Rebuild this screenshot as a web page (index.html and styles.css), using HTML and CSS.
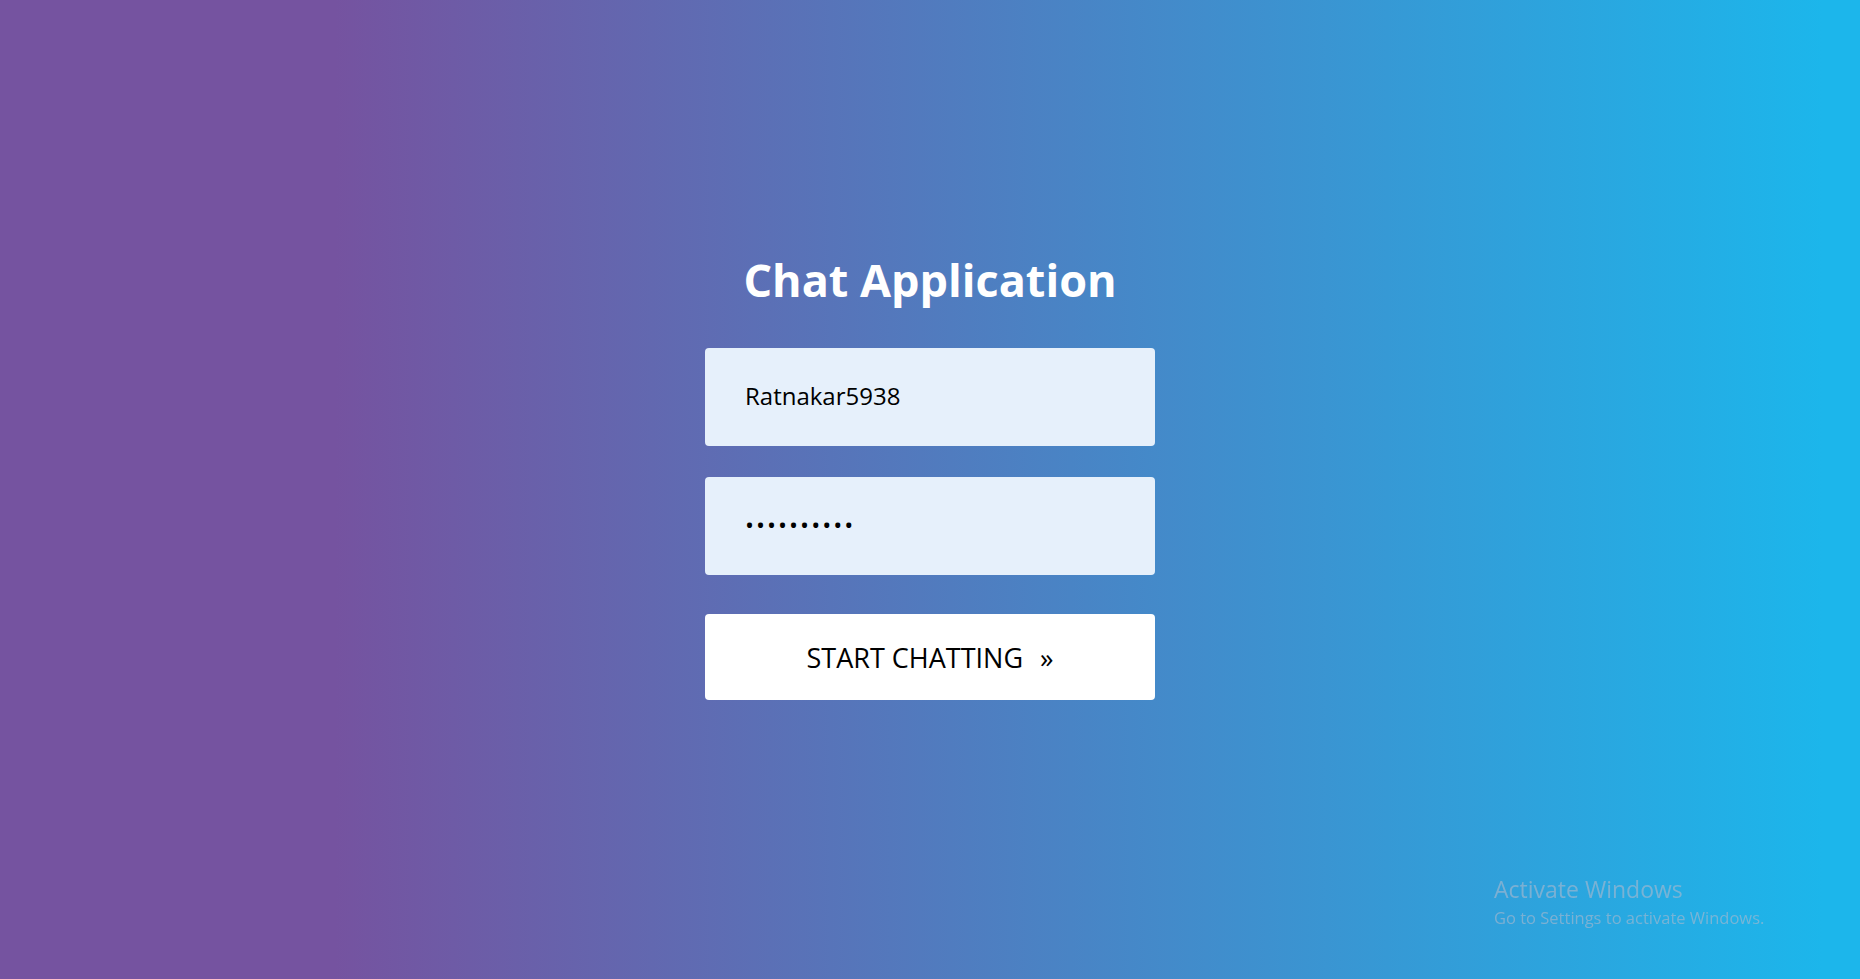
FILE: index.html
```html
<!DOCTYPE html>
<html lang="en">
<head>
    <meta charset="UTF-8">
    <meta name="viewport" content="width=device-width, initial-scale=1.0">
    <title>Chat Application</title>
    <link rel="stylesheet" href="styles.css">
</head>
<body>
    <div class="login">
        <h1>Chat Application</h1>

        <form id="login-form" class="login-form">
            <input type="text" id="username" name="username" value="Ratnakar5938" autocomplete="off">
            <input type="password" id="password" name="password" value="ratnakar12">
            <button type="submit">START CHATTING <span class="arrow">&raquo;</span></button>
        </form>
    </div>

    <div class="watermark">
        <div class="watermark-title">Activate Windows</div>
        <div class="watermark-sub">Go to Settings to activate Windows.</div>
    </div>
</body>
</html>
```

FILE: styles.css
```css
body {
    font-family: "Open Sans", "Noto Sans", Arial, sans-serif;
    background: linear-gradient(to right, #7553a0 18%, #1cb6eb 98%);
    color: #000;
    margin: 0;
    padding: 0;
    min-height: 100vh;
}

.login {
    width: 450px;
    margin: 0 auto;
    padding-top: 251px;
}

h1 {
    margin: 0 0 39px;
    font-size: 45px;
    line-height: 58px;
    font-weight: 700;
    color: white;
    text-align: center;
}

.login-form {
    display: flex;
    flex-direction: column;
}

.login-form input {
    height: 98px;
    box-sizing: border-box;
    padding: 0 40px 3px;
    border: none;
    border-radius: 4px;
    background-color: #e6f0fb;
    font-family: inherit;
    font-size: 24px;
    color: #000;
    outline: none;
    margin-bottom: 31px;
}

.login-form input[type="password"] {
    margin-bottom: 39px;
    letter-spacing: 2px;
}

.login-form button {
    height: 86px;
    border: none;
    border-radius: 4px;
    background-color: white;
    font-family: inherit;
    font-size: 27px;
    color: #000;
    cursor: pointer;
}

.login-form button .arrow {
    margin-left: 10px;
}

.watermark {
    position: fixed;
    left: 1494px;
    top: 874px;
    color: rgba(175, 185, 205, 0.6);
}

.watermark-title {
    font-size: 23px;
    line-height: 30px;
}

.watermark-sub {
    font-size: 16.5px;
    line-height: 28px;
}
```
